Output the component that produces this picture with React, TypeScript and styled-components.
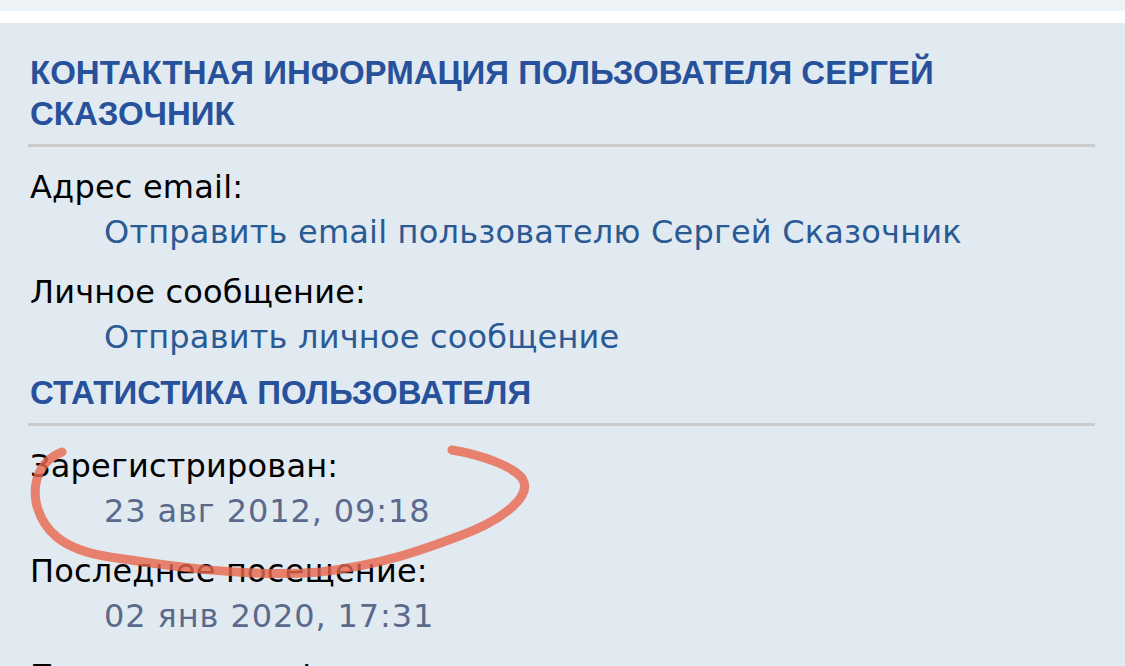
import styled, { createGlobalStyle } from "styled-components";

const GlobalStyle = createGlobalStyle`
  html, body {
    margin: 0;
    padding: 0;
    background: #e1e9f1;
    overflow: hidden;
  }
`;

const Page = styled.div`
  position: relative;
  width: 1125px;
  height: 666px;
  overflow: hidden;
  background: #e1e9f1;
`;

const TopBand = styled.div`
  height: 11px;
  background: #edf2f7;
`;

const WhiteBand = styled.div`
  height: 12px;
  background: #ffffff;
`;

const Panel = styled.div`
  padding: 29px 30px 0 28px;
`;

const Heading = styled.h2<{ $top?: number }>`
  margin: ${(p) => p.$top ?? 0}px 0 0;
  padding: 0 0 10px 2px;
  border-bottom: 3px solid #cbcbcb;
  font-family: "Liberation Sans", Arial, sans-serif;
  font-weight: bold;
  font-size: 33px;
  line-height: 41px;
  color: #27519a;
  text-transform: uppercase;
`;

const List = styled.dl`
  margin: 18px 0 0;
  padding: 0 0 0 2px;
  font-family: "DejaVu Sans", Verdana, sans-serif;
  font-size: 32px;
  line-height: 45px;
  letter-spacing: 0.2px;
`;

const Label = styled.dt`
  color: #000000;
  margin-top: 15px;
  &:first-child {
    margin-top: 0;
  }
`;

const Value = styled.dd<{ $muted?: boolean }>`
  margin: 0 0 0 74px;
  color: ${(p) => (p.$muted ? "#5a6a8b" : "#2a5a94")};
  letter-spacing: ${(p) => (p.$muted ? "0.9px" : "0.2px")};
`;

const Link = styled.a`
  color: inherit;
  text-decoration: none;
`;

const Scribble = styled.svg`
  position: absolute;
  left: 0;
  top: 0;
  pointer-events: none;
`;

export default function App() {
  return (
    <Page>
      <GlobalStyle />
      <TopBand />
      <WhiteBand />
      <Panel>
        <Heading>Контактная информация пользователя Сергей Сказочник</Heading>
        <List>
          <Label>Адрес email:</Label>
          <Value>
            <Link href="#">Отправить email пользователю Сергей Сказочник</Link>
          </Value>
          <Label>Личное сообщение:</Label>
          <Value>
            <Link href="#">Отправить личное сообщение</Link>
          </Value>
        </List>
        <Heading $top={12}>Статистика пользователя</Heading>
        <List>
          <Label>Зарегистрирован:</Label>
          <Value $muted>23 авг 2012, 09:18</Value>
          <Label>Последнее посещение:</Label>
          <Value $muted>02 янв 2020, 17:31</Value>
          <Label>Просмотры профиля:</Label>
        </List>
      </Panel>
      <Scribble width="1125" height="666" viewBox="0 0 1125 666">
        <path
          d="M 452 450 C 482 455, 512 466, 522 478 C 534 496, 502 520, 462 535 C 420 551, 380 565, 320 572 C 250 578, 170 566, 110 557 C 62 550, 42 530, 36 502 C 32 476, 44 459, 62 452"
          fill="none"
          stroke="#e8664c"
          strokeOpacity="0.8"
          strokeWidth="9"
          strokeLinecap="round"
        />
      </Scribble>
    </Page>
  );
}
